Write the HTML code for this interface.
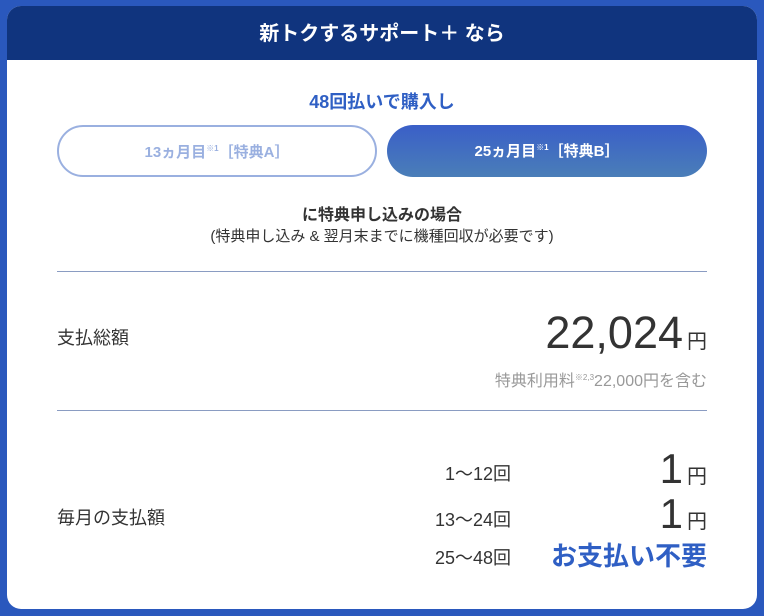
<!DOCTYPE html>
<html><head><meta charset="utf-8"><style>
*{margin:0;padding:0;box-sizing:border-box}
body{width:764px;height:616px;background:#2a58bd;font-family:"Liberation Sans","Noto Sans CJK JP",sans-serif;position:relative;overflow:hidden;color:#333}
.card{position:absolute;left:7px;top:6px;width:750px;height:603px;background:#fff;border-radius:14px;overflow:hidden}
.hd{position:absolute;left:0;top:0;width:750px;height:54px;background:#10347e;color:#fff;font-size:20px;font-weight:bold;text-align:center;line-height:56px}
.a{position:absolute;white-space:nowrap}
.btn{position:absolute;top:119px;width:320px;height:52px;border-radius:26px;text-align:center;line-height:51px;font-weight:bold;font-size:15px}
sup{font-size:8px;vertical-align:6px;line-height:0}
.line{position:absolute;left:50px;width:650px;height:1px;background:#8a9cc2}
</style></head><body>
<div class="card">
<div class="hd">新トクするサポート＋ なら</div>
<div class="a" style="left:0;width:750px;text-align:center;top:82px;font-size:18px;font-weight:bold;color:#2f5fc4">48回払いで購入し</div>
<div class="btn" style="left:50px;border:2px solid #9ab0e0;color:#9ab0e0">13ヵ月目<sup>※1</sup>［特典A］</div>
<div class="btn" style="left:380px;background:linear-gradient(#3a5fc8,#4a7eb8);color:#fff;line-height:54px">25ヵ月目<sup>※1</sup>［特典B］</div>
<div class="a" style="left:0;width:750px;text-align:center;top:195px;font-size:16px;font-weight:bold">に特典申し込みの場合</div>
<div class="a" style="left:0;width:750px;text-align:center;top:219px;font-size:15px">(特典申し込み &amp; 翌月末までに機種回収が必要です)</div>
<div class="line" style="top:265px"></div>
<div class="a" style="left:50px;top:318px;font-size:18px">支払総額</div>
<div class="a" style="right:50px;top:302px;font-size:45px;line-height:50px">22,024<span style="font-size:20px;margin-left:4px">円</span></div>
<div class="a" style="right:50px;top:361px;font-size:16px;color:#999">特典利用料<sup>※2,3</sup>22,000円を含む</div>
<div class="line" style="top:404px"></div>
<div class="a" style="left:50px;top:498px;font-size:18px">毎月の支払額</div>
<div class="a" style="right:246px;top:454px;font-size:18px">1～12回</div>
<div class="a" style="right:246px;top:500px;font-size:18px">13～24回</div>
<div class="a" style="right:246px;top:538px;font-size:18px">25～48回</div>
<div class="a" style="right:50px;top:440px;font-size:42px;line-height:46px">1<span style="font-size:20px;margin-left:4px">円</span></div>
<div class="a" style="right:50px;top:485px;font-size:42px;line-height:46px">1<span style="font-size:20px;margin-left:4px">円</span></div>
<div class="a" style="right:50px;top:530px;font-size:26px;font-weight:bold;color:#2f5fc4">お支払い不要</div>
</div>
</body></html>
